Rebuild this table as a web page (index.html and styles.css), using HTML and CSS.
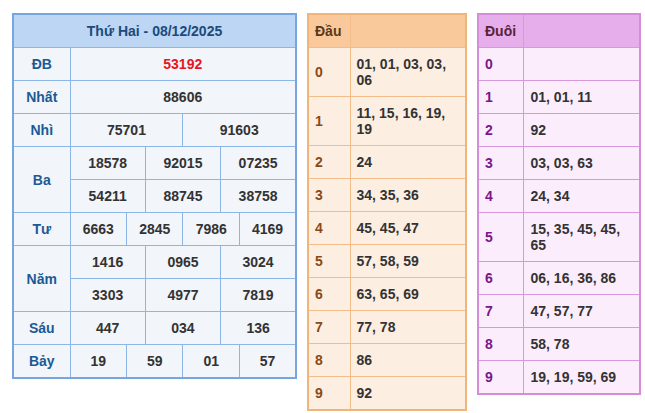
FILE: index.html
```html
<!DOCTYPE html>
<html lang="vi">
<head>
<meta charset="utf-8">
<link rel="stylesheet" href="styles.css">
</head>
<body>
<div class="wrap">
  <table class="kq">
    <colgroup>
      <col class="c-label">
      <col><col><col><col><col><col><col><col><col><col><col><col>
    </colgroup>
    <thead>
      <tr><th colspan="13" class="title">Thứ Hai - 08/12/2025</th></tr>
    </thead>
    <tbody>
      <tr><td class="lbl">ĐB</td><td colspan="12" class="db">53192</td></tr>
      <tr><td class="lbl">Nhất</td><td colspan="12">88606</td></tr>
      <tr><td class="lbl">Nhì</td><td colspan="6">75701</td><td colspan="6">91603</td></tr>
      <tr><td class="lbl" rowspan="2">Ba</td><td colspan="4">18578</td><td colspan="4">92015</td><td colspan="4">07235</td></tr>
      <tr><td colspan="4">54211</td><td colspan="4">88745</td><td colspan="4">38758</td></tr>
      <tr><td class="lbl">Tư</td><td colspan="3">6663</td><td colspan="3">2845</td><td colspan="3">7986</td><td colspan="3">4169</td></tr>
      <tr><td class="lbl" rowspan="2">Năm</td><td colspan="4">1416</td><td colspan="4">0965</td><td colspan="4">3024</td></tr>
      <tr><td colspan="4">3303</td><td colspan="4">4977</td><td colspan="4">7819</td></tr>
      <tr><td class="lbl">Sáu</td><td colspan="4">447</td><td colspan="4">034</td><td colspan="4">136</td></tr>
      <tr><td class="lbl">Bảy</td><td colspan="3">19</td><td colspan="3">59</td><td colspan="3">01</td><td colspan="3">57</td></tr>
    </tbody>
  </table>

  <table class="lt dau">
    <colgroup><col class="c1"><col></colgroup>
    <thead><tr><th>Đầu</th><th></th></tr></thead>
    <tbody>
      <tr><td class="k">0</td><td>01, 01, 03, 03, 06</td></tr>
      <tr><td class="k">1</td><td>11, 15, 16, 19, 19</td></tr>
      <tr><td class="k">2</td><td>24</td></tr>
      <tr><td class="k">3</td><td>34, 35, 36</td></tr>
      <tr><td class="k">4</td><td>45, 45, 47</td></tr>
      <tr><td class="k">5</td><td>57, 58, 59</td></tr>
      <tr><td class="k">6</td><td>63, 65, 69</td></tr>
      <tr><td class="k">7</td><td>77, 78</td></tr>
      <tr><td class="k">8</td><td>86</td></tr>
      <tr><td class="k">9</td><td>92</td></tr>
    </tbody>
  </table>

  <table class="lt duoi">
    <colgroup><col class="c1"><col></colgroup>
    <thead><tr><th>Đuôi</th><th></th></tr></thead>
    <tbody>
      <tr><td class="k">0</td><td></td></tr>
      <tr><td class="k">1</td><td>01, 01, 11</td></tr>
      <tr><td class="k">2</td><td>92</td></tr>
      <tr><td class="k">3</td><td>03, 03, 63</td></tr>
      <tr><td class="k">4</td><td>24, 34</td></tr>
      <tr><td class="k">5</td><td>15, 35, 45, 45, 65</td></tr>
      <tr><td class="k">6</td><td>06, 16, 36, 86</td></tr>
      <tr><td class="k">7</td><td>47, 57, 77</td></tr>
      <tr><td class="k">8</td><td>58, 78</td></tr>
      <tr><td class="k">9</td><td>19, 19, 59, 69</td></tr>
    </tbody>
  </table>
</div>
</body>
</html>
```
FILE: styles.css
```css
html, body {
  margin: 0;
  padding: 0;
  background: #ffffff;
}
body {
  font-family: "Liberation Sans", Arial, sans-serif;
  font-size: 14px;
  font-weight: bold;
  color: #333333;
}
.wrap {
  display: flex;
  align-items: flex-start;
  gap: 10px;
  padding: 13px 0 0 12px;
}
table {
  border-collapse: collapse;
  table-layout: fixed;
}
td, th {
  padding: 8px 6px;
  line-height: 16px;
  font-weight: bold;
}

/* results table */
.kq {
  width: 285px;
  border: 2px solid #76a6e0;
  background: #f2f5fa;
}
.kq .c-label { width: 57px; }
.kq td {
  border: 1px solid #8cb6e6;
  text-align: center;
  color: #333333;
  padding: 8px 0;
}
.kq .title {
  background: #bcd6f4;
  color: #1c4a7c;
  text-align: center;
  padding: 8px 0;
  border-bottom: 1px solid #8cb6e6;
}
.kq .lbl { color: #1b5a94; }
.kq .db { color: #e6161c; }

/* loto tables */
.lt td, .lt th {
  text-align: left;
}
.dau {
  width: 160px;
  border: 2px solid #efb57a;
  background: #fdeee2;
}
.dau .c1 { width: 42px; }
.dau td, .dau th { border: 1px solid #f2bd8a; }
.dau th {
  background: #f9c99b;
  color: #5a3817;
  padding: 8px 6px;
}
.dau .k { color: #8b4a14; }

.duoi {
  width: 164px;
  border: 2px solid #d48ed8;
  background: #fcedfc;
}
.duoi .c1 { width: 45px; }
.duoi td, .duoi th { border: 1px solid #d898dc; }
.duoi td { padding-left: 7px; }
.duoi th {
  background: #e6aeea;
  color: #5a2337;
  padding: 8px 6px;
}
.duoi .k { color: #7a1688; padding-left: 6px; }
```
